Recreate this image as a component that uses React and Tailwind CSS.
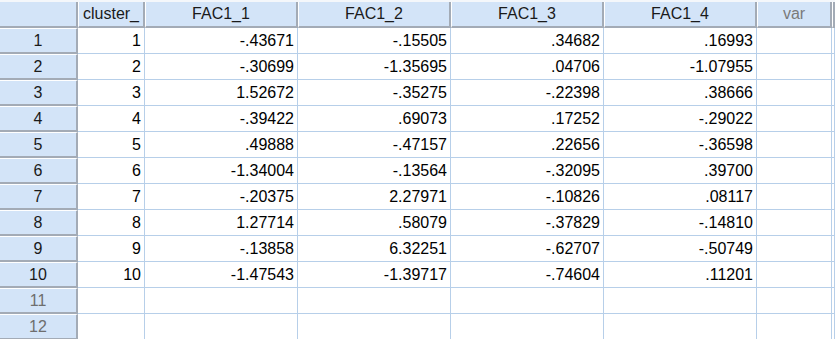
import React from 'react';

const cols = [
  { name: 'cluster_', w: 'w-[67px]' },
  { name: 'FAC1_1', w: 'w-[153px]' },
  { name: 'FAC1_2', w: 'w-[153px]' },
  { name: 'FAC1_3', w: 'w-[153px]' },
  { name: 'FAC1_4', w: 'w-[153px]' },
  { name: 'var', w: 'w-[75px]', dim: true },
];

const rows = [
  ['1', '-.43671', '-.15505', '.34682', '.16993'],
  ['2', '-.30699', '-1.35695', '.04706', '-1.07955'],
  ['3', '1.52672', '-.35275', '-.22398', '.38666'],
  ['4', '-.39422', '.69073', '.17252', '-.29022'],
  ['5', '.49888', '-.47157', '.22656', '-.36598'],
  ['6', '-1.34004', '-.13564', '-.32095', '.39700'],
  ['7', '-.20375', '2.27971', '-.10826', '.08117'],
  ['8', '1.27714', '.58079', '-.37829', '-.14810'],
  ['9', '-.13858', '6.32251', '-.62707', '-.50749'],
  ['10', '-1.47543', '-1.39717', '-.74604', '.11201'],
  null,
  null,
];

const hdr = 'bg-[#d3e4f8] border-l border-l-white border-r-2 border-r-[#a3abb6] border-b-2 border-b-[#a3abb6] flex items-center justify-center';

export default function App() {
  return (
    <div className="w-[835px] h-[339px] overflow-hidden bg-white text-[16px] text-black" style={{ fontFamily: '"Liberation Sans", Arial, sans-serif' }}>
      <div className="flex h-[28px] border-t-2 border-t-[#f4f7fb]">
        <div className="w-[78px] shrink-0 bg-[#d3e4f8] border-r-2 border-r-[#a3abb6] border-b-2 border-b-[#a3abb6]"></div>
        {cols.map(c => (
          <div key={c.name} className={`${c.w} shrink-0 whitespace-nowrap overflow-hidden ${hdr} ${c.dim ? 'text-[#7a7a7a]' : 'text-[#1a1a1a]'}`}>{c.name}</div>
        ))}
        <div className={`flex-1 ${hdr}`}></div>
      </div>
      {rows.map((r, i) => (
        <div key={i} className="flex h-[26px]">
          <div className={`w-[78px] shrink-0 bg-[#d3e4f8] border-t border-t-white border-r-2 border-r-[#a3abb6] border-b-2 border-b-[#a3abb6] flex items-center justify-center ${r ? 'text-[#1a1a1a]' : 'text-[#6e6e6e]'}`}>{i + 1}</div>
          {cols.map((c, j) => (
            <div key={c.name} className={`${c.w} shrink-0 border-r border-b border-[#b7cfe9] flex items-center justify-end pr-[3px]`}>{r && r[j]}</div>
          ))}
          <div className="flex-1 border-r border-b border-[#b7cfe9]"></div>
        </div>
      ))}
    </div>
  );
}
